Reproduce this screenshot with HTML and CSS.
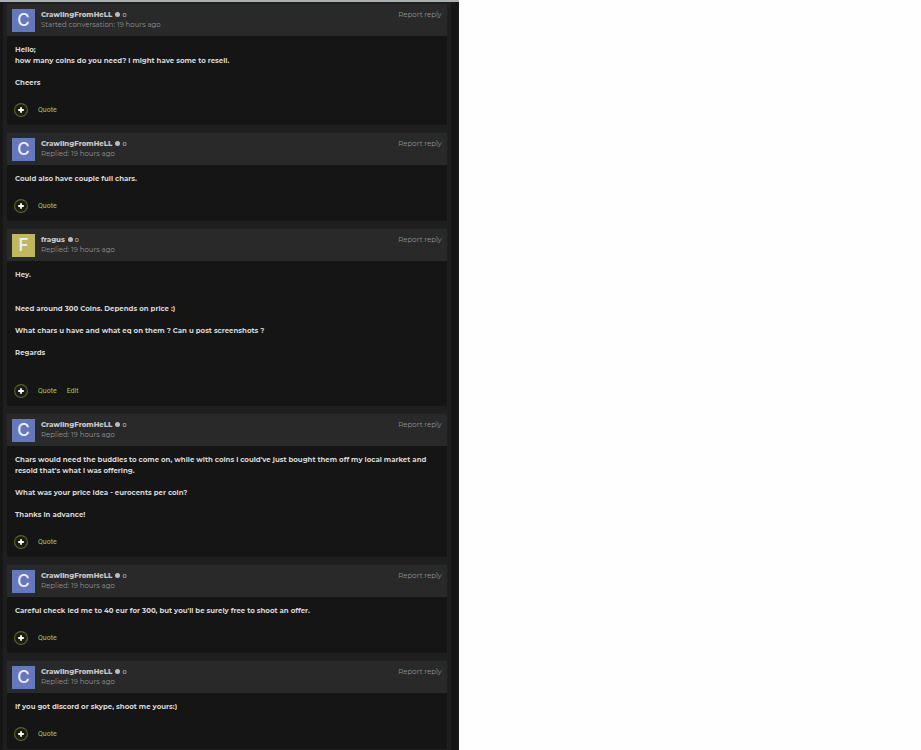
FILE: index.html
```
<!DOCTYPE html>
<html lang="en">
<head>
    <meta charset="UTF-8">
    <meta name="viewport" content="width=device-width, initial-scale=1.0">
    <title>Conversation</title>
    <link rel="stylesheet" href="styles.css">
</head>
<body>
    <svg class="sprite" aria-hidden="true">
        <symbol id="plus" viewBox="0 0 14 14">
            <circle cx="7" cy="7" r="6.4" fill="#1b1c13" stroke="#56661f" stroke-width="1.1"/>
            <path d="M7 4.2v5.6M4.2 7h5.6" stroke="#fff" stroke-width="1.8"/>
        </symbol>
    </svg>

    <main class="conversation">
        <div class="posts">
            <article class="post">
                <header class="post-header">
                    <span class="avatar">C</span>
                    <div class="author">
                        <h2><a href="#">CrawlingFromHeLL</a> <span class="dot"></span> <span class="rep">0</span></h2>
                        <p>Started conversation: 19 hours ago</p>
                    </div>
                    <a class="report" href="#">Report reply</a>
                </header>
                <div class="post-text">
                    <p>Hello;<br>how many coins do you need? i might have some to resell.</p>
                    <p>Cheers</p>
                </div>
                <footer class="post-actions">
                    <button type="button" aria-label="MultiQuote"><svg><use href="#plus"/></svg></button>
                    <a href="#">Quote</a>
                </footer>
            </article>

            <article class="post">
                <header class="post-header">
                    <span class="avatar">C</span>
                    <div class="author">
                        <h2><a href="#">CrawlingFromHeLL</a> <span class="dot"></span> <span class="rep">0</span></h2>
                        <p>Replied: 19 hours ago</p>
                    </div>
                    <a class="report" href="#">Report reply</a>
                </header>
                <div class="post-text">
                    <p>Could also have couple full chars.</p>
                </div>
                <footer class="post-actions">
                    <button type="button" aria-label="MultiQuote"><svg><use href="#plus"/></svg></button>
                    <a href="#">Quote</a>
                </footer>
            </article>

            <article class="post">
                <header class="post-header">
                    <span class="avatar avatar-yellow">F</span>
                    <div class="author">
                        <h2><a href="#">fragus</a> <span class="dot"></span> <span class="rep">0</span></h2>
                        <p>Replied: 19 hours ago</p>
                    </div>
                    <a class="report" href="#">Report reply</a>
                </header>
                <div class="post-text">
                    <p>Hey.</p>
                    <p class="spaced">Need around 300 Coins. Depends on price :)</p>
                    <p>What chars u have and what eq on them ? Can u post screenshots ?</p>
                    <p>Regards<br><br></p>
                </div>
                <footer class="post-actions">
                    <button type="button" aria-label="MultiQuote"><svg><use href="#plus"/></svg></button>
                    <a href="#">Quote</a>
                    <a href="#">Edit</a>
                </footer>
            </article>

            <article class="post">
                <header class="post-header">
                    <span class="avatar">C</span>
                    <div class="author">
                        <h2><a href="#">CrawlingFromHeLL</a> <span class="dot"></span> <span class="rep">0</span></h2>
                        <p>Replied: 19 hours ago</p>
                    </div>
                    <a class="report" href="#">Report reply</a>
                </header>
                <div class="post-text">
                    <p>Chars would need the buddies to come on, while with coins i could've just bought them off my local market and resold that's what i was offering.</p>
                    <p>What was your price idea - eurocents per coin?</p>
                    <p>Thanks in advance!</p>
                </div>
                <footer class="post-actions">
                    <button type="button" aria-label="MultiQuote"><svg><use href="#plus"/></svg></button>
                    <a href="#">Quote</a>
                </footer>
            </article>

            <article class="post">
                <header class="post-header">
                    <span class="avatar">C</span>
                    <div class="author">
                        <h2><a href="#">CrawlingFromHeLL</a> <span class="dot"></span> <span class="rep">0</span></h2>
                        <p>Replied: 19 hours ago</p>
                    </div>
                    <a class="report" href="#">Report reply</a>
                </header>
                <div class="post-text">
                    <p>Careful check led me to 40 eur for 300, but you'll be surely free to shoot an offer.</p>
                </div>
                <footer class="post-actions">
                    <button type="button" aria-label="MultiQuote"><svg><use href="#plus"/></svg></button>
                    <a href="#">Quote</a>
                </footer>
            </article>

            <article class="post">
                <header class="post-header">
                    <span class="avatar">C</span>
                    <div class="author">
                        <h2><a href="#">CrawlingFromHeLL</a> <span class="dot"></span> <span class="rep">0</span></h2>
                        <p>Replied: 19 hours ago</p>
                    </div>
                    <a class="report" href="#">Report reply</a>
                </header>
                <div class="post-text">
                    <p>If you got discord or skype, shoot me yours:)</p>
                </div>
                <footer class="post-actions">
                    <button type="button" aria-label="MultiQuote"><svg><use href="#plus"/></svg></button>
                    <a href="#">Quote</a>
                </footer>
            </article>
        </div>
    </main>
</body>
</html>
```
FILE: styles.css
```
* {
    box-sizing: border-box;
}
body {
    margin: 0;
    background: #fefefe;
    font-family: Montserrat, Inter, sans-serif;
    font-size: 7px;
    line-height: 11px;
}
h2, p {
    margin: 0;
}
a {
    color: inherit;
    text-decoration: none;
}
.sprite {
    display: none;
}
.conversation {
    width: 49.8%;
    min-height: 100vh;
    padding: 0 8px 0 3px;
    background: #161616;
    border-top: 2px solid #a9b0b0;
}
.posts {
    display: flex;
    flex-direction: column;
    gap: 8px;
    min-height: 100vh;
    margin-bottom: -2px;
    padding: 2px 4px 0;
    background: #1f1f1f;
}
.post {
    background: #151515;
}
.post-header {
    display: flex;
    align-items: center;
    gap: 6px;
    height: 32px;
    padding: 0 5px;
    background: #292929;
}
.avatar {
    width: 23px;
    height: 23px;
    background: #6478bd;
    color: #edf1ff;
    font-family: Inter, sans-serif;
    font-size: 17px;
    font-weight: 500;
    line-height: 23px;
    text-align: center;
}
.avatar-yellow {
    background: #c0b95c;
}
.author {
    flex: 1;
    color: #929292;
    line-height: 10px;
}
.author h2 {
    color: #c4c4c4;
    font-size: 7px;
    font-weight: 800;
}
.dot {
    display: inline-block;
    width: 5px;
    height: 5px;
    margin-left: 1px;
    border-radius: 50%;
    background: #bbb;
}
.rep {
    font-size: 6px;
    font-weight: 500;
}
.report {
    align-self: flex-start;
    padding-top: 5px;
    color: #929292;
}
.post-text {
    padding: 8px 8px 15px;
    color: #d6d6d6;
    font-weight: 700;
}
.post-text p + p {
    margin-top: 11px;
}
.post-text p + .spaced {
    margin-top: 23px;
}
.post-actions {
    display: flex;
    align-items: center;
    gap: 10px;
    padding: 0 7px 8px;
    color: #a3cc48;
    font-family: Roboto, sans-serif;
}
.post-actions button {
    width: 14px;
    height: 14px;
    padding: 0;
    border: 0;
    background: none;
    cursor: pointer;
}
.post-actions svg {
    display: block;
    width: 14px;
    height: 14px;
}
```
